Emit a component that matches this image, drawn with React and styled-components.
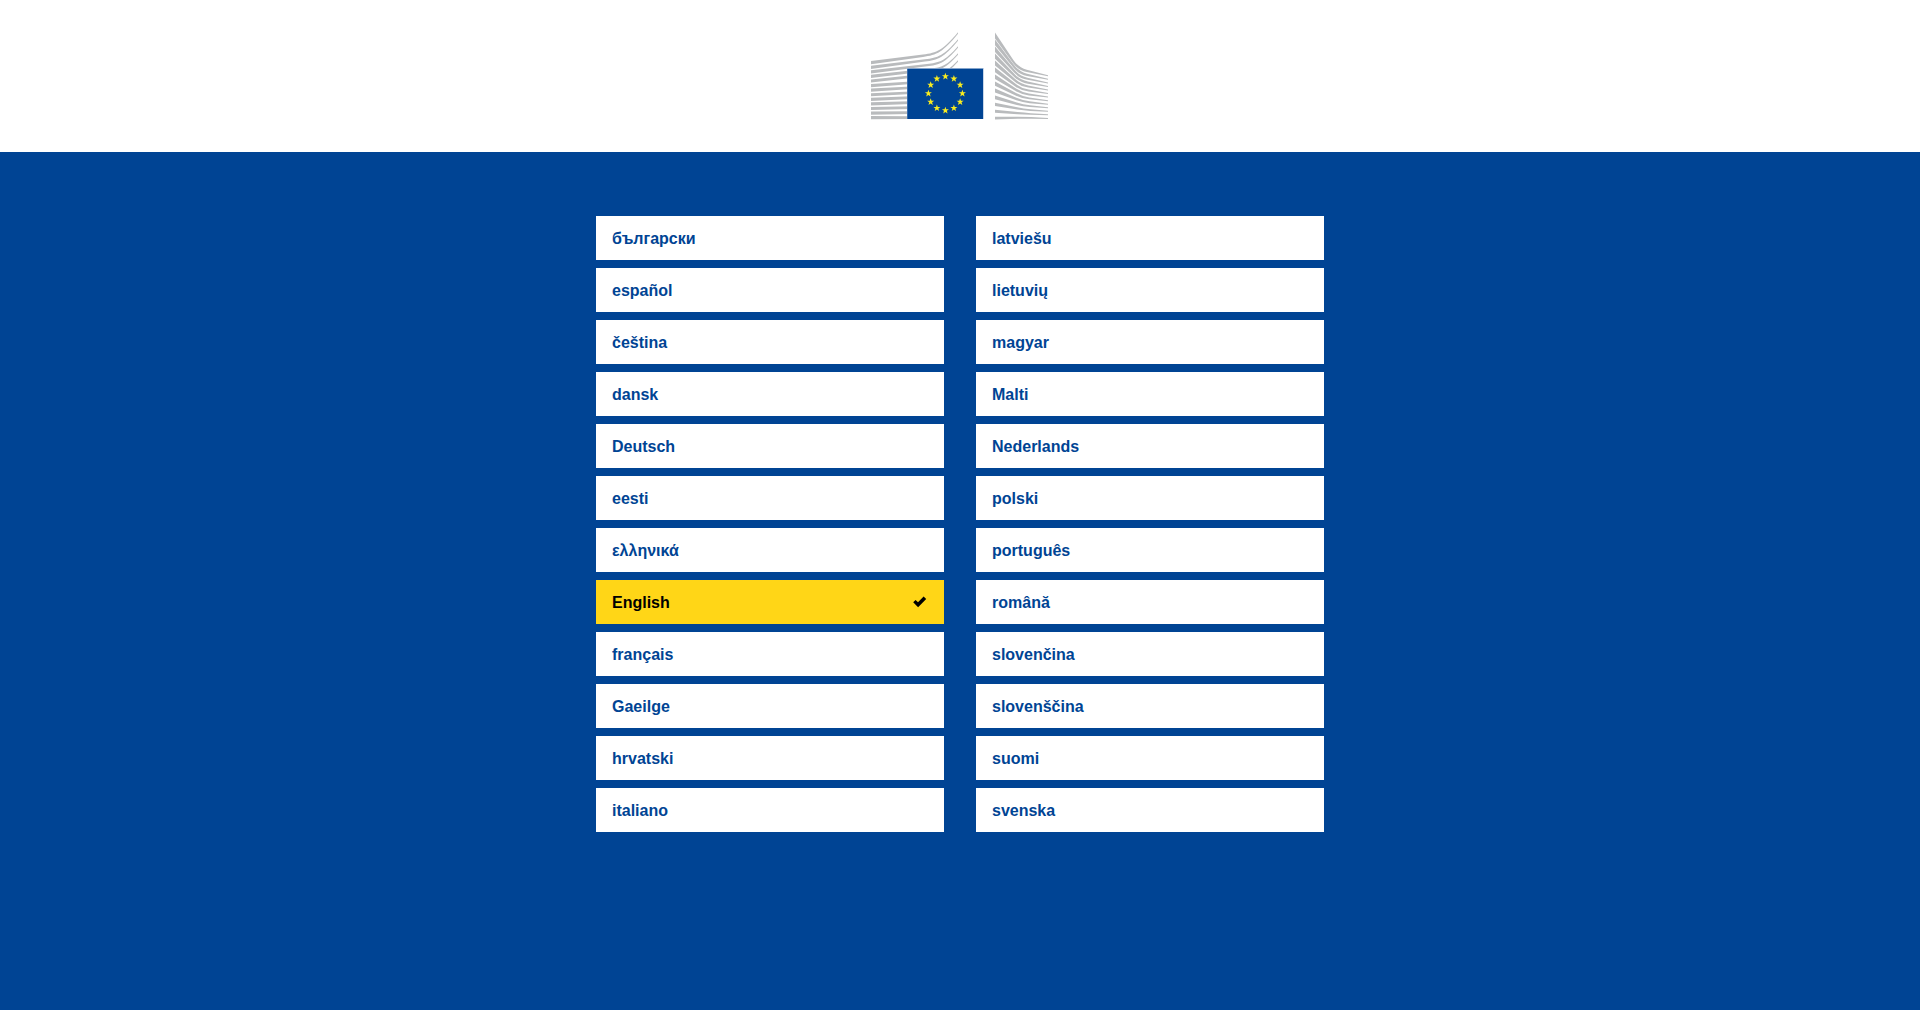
import React from "react";
import styled, { createGlobalStyle, css } from "styled-components";

const GlobalStyle = createGlobalStyle`
  * { box-sizing: border-box; }
  body { margin: 0; background: #004494; font-family: Arial, "Liberation Sans", sans-serif; }
`;

const Page = styled.div`
  min-height: 100vh;
  display: flex;
  flex-direction: column;
  background: #004494;
`;

const Header = styled.header`
  display: flex;
  justify-content: center;
  padding: 32px 16px;
  background: #fff;
`;

const Logo = styled.svg`
  display: block;
  width: 178px;
  height: 88px;
`;

const Main = styled.main`
  width: 100%;
  max-width: 760px;
  margin: 0 auto;
  padding: 64px 16px;
`;

const Columns = styled.nav`
  display: grid;
  grid-template-columns: 1fr 1fr;
  gap: 32px;

  @media (max-width: 560px) {
    grid-template-columns: 1fr;
    gap: 8px;
  }
`;

const LanguageList = styled.ul`
  display: flex;
  flex-direction: column;
  gap: 8px;
  margin: 0;
  padding: 0;
  list-style: none;
`;

const LanguageLink = styled.a`
  display: flex;
  align-items: center;
  justify-content: space-between;
  padding: 13px 16px 11px;
  background: #fff;
  color: #004494;
  font-size: 16px;
  font-weight: 700;
  line-height: 20px;
  text-decoration: none;

  &:hover { text-decoration: underline; }

  ${(p) => p.$active && css`
    background: #ffd617;
    color: #000;
  `}
`;

const CheckIcon = styled.svg`
  width: 16px;
  height: 16px;
  fill: currentColor;
`;

const languages = [
  [
    ["bg", "български"], ["es", "español"], ["cs", "čeština"], ["da", "dansk"],
    ["de", "Deutsch"], ["et", "eesti"], ["el", "ελληνικά"], ["en", "English"],
    ["fr", "français"], ["ga", "Gaeilge"], ["hr", "hrvatski"], ["it", "italiano"],
  ],
  [
    ["lv", "latviešu"], ["lt", "lietuvių"], ["hu", "magyar"], ["mt", "Malti"],
    ["nl", "Nederlands"], ["pl", "polski"], ["pt", "português"], ["ro", "română"],
    ["sk", "slovenčina"], ["sl", "slovenščina"], ["fi", "suomi"], ["sv", "svenska"],
  ],
];

const bands = Array.from({ length: 13 }, (_, k) => k);

// Tapered band of the left wing; the lower ones run straight behind the flag.
function leftBand(k) {
  const y0 = 30.7 + 4.58 * k;
  if (k > 4) {
    const y1 = y0 - 5 * (1 - k / 12);
    return `M0 ${y0 - 1.6}L40 ${y1 - 1.3}V${y1 + 1.3}L0 ${y0 + 1.6}Z`;
  }
  const x = 52 + 2 * k;
  const y = 23.7 + 4.7 * k;
  const end = 1 + 7 * k;
  const c1 = [66 + k, 22 + 4.9 * k];
  const c2 = [72 + 0.7 * k, 19 + 5.8 * k];
  return `M0 ${y0 - 1.6}L${x} ${y - 1.2}C${c1[0]} ${c1[1] - 1.2} ${c2[0]} ${c2[1] - 1} 87 ${end - 0.8}V${end + 0.8}C${c2[0]} ${c2[1] + 1} ${c1[0]} ${c1[1] + 1.2} ${x} ${y + 1.2}L0 ${y0 + 1.6}Z`;
}

// Tapered band of the right wing: steep, a soft knee, then nearly level.
function rightBand(k) {
  const steep = 1 - k / 12;
  const half = 1.4 + 1.6 * steep;
  const knee = 0.9 + 0.5 * steep;
  const y0 = 3.5 + 6.88 * k;
  const kx = 147.5 + k * 0.5;
  const ky = 37 + 4.06 * k;
  const y1 = 43.8 + 3.55 * k;
  const edge = (d0, d1, d2) => {
    const a = [124 + (kx - 124) * 0.78, y0 + d0 + (ky + d1 - y0 - d0) * 0.78];
    const b = [kx + (177 - kx) * 0.28, ky + d1 + (y1 + d2 - ky - d1) * 0.28];
    return [a, [kx, ky + d1], b];
  };
  const u = edge(-half, -knee, -0.5);
  const l = edge(half, knee, 0.5);
  return `M124 ${y0 - half}L${u[0]}Q${u[1]} ${u[2]}L177 ${y1 - 0.5}V${y1 + 0.5}L${l[2]}Q${l[1]} ${l[0]}L124 ${y0 + half}Z`;
}

function star(cx, cy) {
  return Array.from({ length: 10 }, (_, i) => {
    const r = i % 2 ? 1.5 : 3.7;
    const a = (i * Math.PI) / 5;
    return `${cx + r * Math.sin(a)},${cy - r * Math.cos(a)}`;
  }).join(" ");
}

function CommissionLogo() {
  return (
    <Logo viewBox="0 0 178 88" role="img" aria-label="European Commission">
      <g fill="#b9bbbd">
        {bands.map((k) => <path key={`l${k}`} d={leftBand(k)} />)}
        {bands.map((k) => <path key={`r${k}`} d={rightBand(k)} />)}
      </g>
      <path fill="#b0c4de" d="M36 36h76.7v51H36z" />
      <path fill="#004494" d="M36.3 36.7H112V87H36.3z" />
      <g fill="#f9ec1f">
        {Array.from({ length: 12 }, (_, i) => {
          const a = (i * Math.PI) / 6;
          return <polygon key={i} points={star(74.4 + 17 * Math.sin(a), 61.4 - 17 * Math.cos(a))} />;
        })}
      </g>
    </Logo>
  );
}

export default function App() {
  return (
    <Page>
      <GlobalStyle />
      <Header>
        <CommissionLogo />
      </Header>
      <Main>
        <Columns aria-label="Language">
          {languages.map((column, i) => (
            <LanguageList key={i}>
              {column.map(([code, name]) => {
                const active = code === "en";
                return (
                  <li key={code}>
                    <LanguageLink
                      href={`#${code}`}
                      lang={code}
                      hrefLang={code}
                      $active={active}
                      aria-current={active ? "true" : undefined}
                    >
                      {name}
                      {active && (
                        <CheckIcon viewBox="0 0 16 16" aria-hidden="true">
                          <path d="M1.2 7.2 3.6 4.9 6 7.2 11.6 1.6 14.2 4 6.1 12.2Z" />
                        </CheckIcon>
                      )}
                    </LanguageLink>
                  </li>
                );
              })}
            </LanguageList>
          ))}
        </Columns>
      </Main>
    </Page>
  );
}
